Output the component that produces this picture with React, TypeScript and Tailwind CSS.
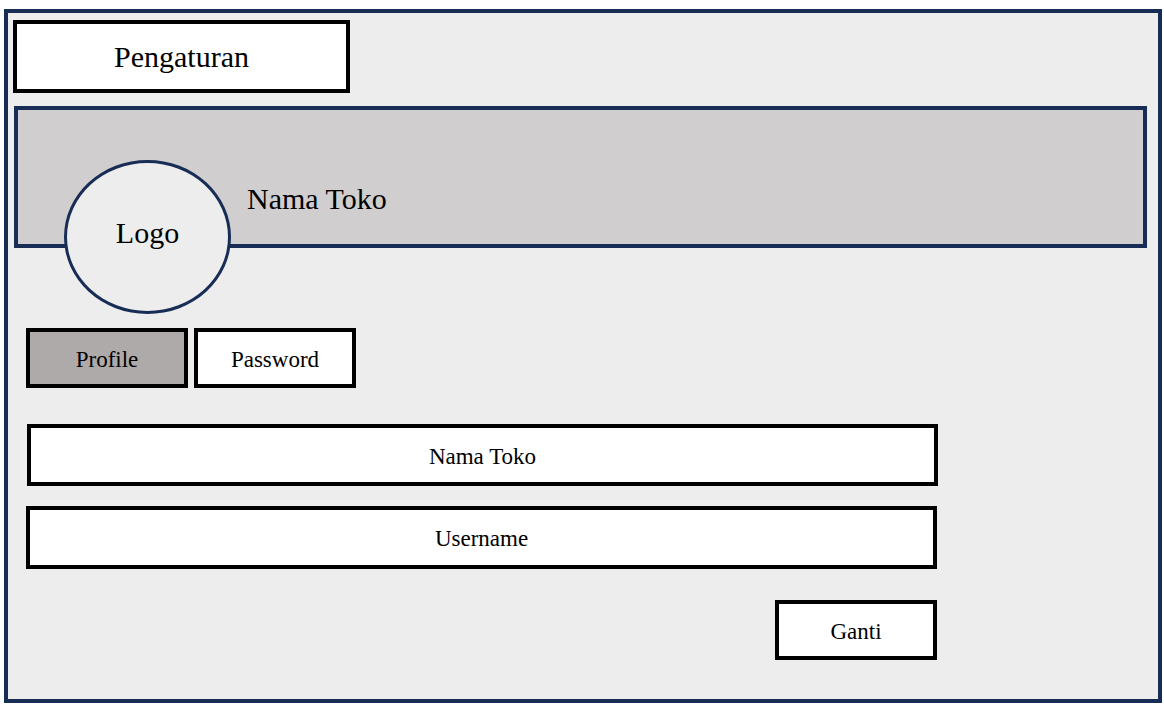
const serif = { fontFamily: '"Liberation Serif", "Times New Roman", serif' };

type BoxProps = {
    label: string;
    className?: string;
};

const Box = ({ label, className = "" }: BoxProps) => {
    return (
        <div className={`flex items-center justify-center border-4 border-black pt-[4px] text-[23px] text-black ${className}`}>
            {label}
        </div>
    );
};

const App = () => {
    return (
        <div className="w-[1164px] h-[708px] bg-white overflow-hidden" style={serif}>
            <div className="ml-[4px] mt-[9px] w-[1158px] h-[694px] border-4 border-[#182d55] bg-[#ededed] flex flex-col items-start">
                <div className="ml-[5px] mt-[7px] w-[337px] h-[73px] border-4 border-black bg-white flex items-center justify-center text-[30px] text-black">
                    Pengaturan
                </div>

                <div className="relative ml-[6px] mt-[13px] w-[1133px] h-[142px] border-4 border-[#182d55] bg-[#d0cece] pl-[229px] pt-[74px]">
                    <div className="absolute left-[46px] top-[50px] w-[167px] h-[154px] rounded-[50%] border-[3px] border-[#182d55] bg-[#ededed] flex items-center justify-center pb-[8px] text-[30px] leading-none text-black">
                        Logo
                    </div>
                    <span className="block text-[30px] leading-none text-black">Nama Toko</span>
                </div>

                <div className="ml-[18px] mt-[80px] flex gap-[6px]">
                    <Box label="Profile" className="w-[162px] h-[60px] bg-[#aeaaaa]" />
                    <Box label="Password" className="w-[162px] h-[60px] bg-white" />
                </div>

                <Box label="Nama Toko" className="ml-[19px] mt-[36px] w-[911px] h-[62px] bg-white" />
                <Box label="Username" className="ml-[18px] mt-[20px] w-[911px] h-[63px] bg-white" />

                <Box label="Ganti" className="ml-[767px] mt-[31px] w-[162px] h-[60px] bg-white" />
            </div>
        </div>
    );
};

export default App;
